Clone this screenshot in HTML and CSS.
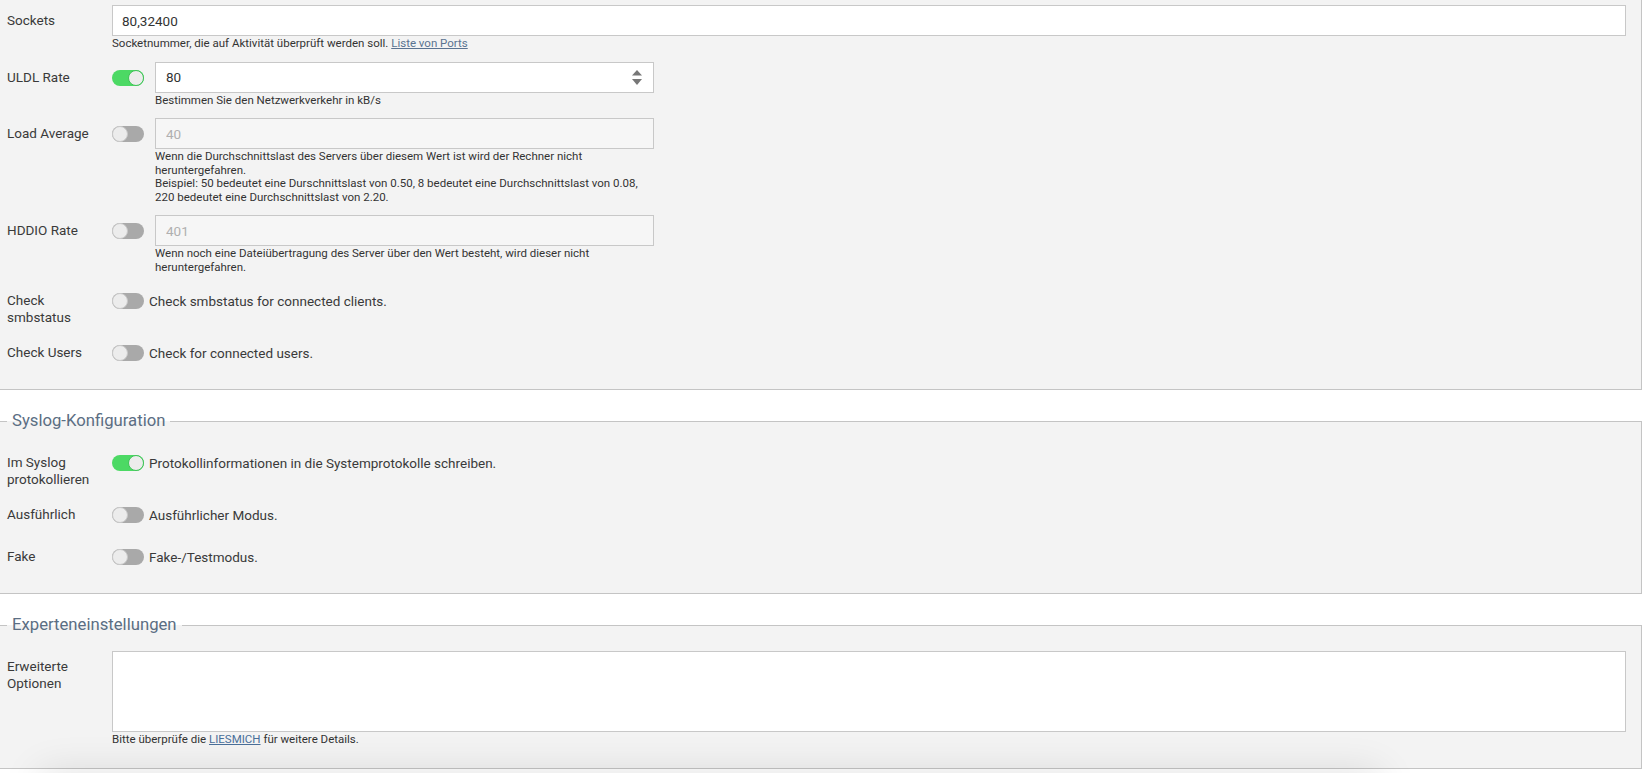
FILE: index.html
```html
<!DOCTYPE html>
<html>
<head>
    <title>Sleep Einstellungen</title>
    <link rel="stylesheet" href="styles.css">
</head>
<body>
    <div class="page">
        <fieldset class="group cut">
            <div class="row">
                <div class="label">Sockets</div>
                <div class="field">
                    <input class="text" type="text" value="80,32400">
                    <p class="help">Socketnummer, die auf Aktivität überprüft werden soll. <a href="#">Liste von Ports</a></p>
                </div>
            </div>
            <div class="row">
                <div class="label">ULDL Rate</div>
                <div class="field with-switch">
                    <span class="switch on"><span class="knob"></span></span>
                    <div class="stack">
                        <div class="number">
                            <input type="text" value="80">
                            <svg class="spin" width="10" height="15" viewBox="0 0 10 15"><polygon points="0,5.5 5,0 10,5.5"/><polygon points="0,9 10,9 5,15"/></svg>
                        </div>
                        <p class="help">Bestimmen Sie den Netzwerkverkehr in kB/s</p>
                    </div>
                </div>
            </div>
            <div class="row">
                <div class="label">Load Average</div>
                <div class="field with-switch">
                    <span class="switch"><span class="knob"></span></span>
                    <div class="stack">
                        <div class="number off">
                            <input type="text" value="40" disabled>
                        </div>
                        <p class="help">Wenn die Durchschnittslast des Servers über diesem Wert ist wird der Rechner nicht heruntergefahren.<br>Beispiel: 50 bedeutet eine Durschnittslast von 0.50, 8 bedeutet eine Durchschnittslast von 0.08, 220 bedeutet eine Durchschnittslast von 2.20.</p>
                    </div>
                </div>
            </div>
            <div class="row">
                <div class="label">HDDIO Rate</div>
                <div class="field with-switch">
                    <span class="switch"><span class="knob"></span></span>
                    <div class="stack">
                        <div class="number off">
                            <input type="text" value="401" disabled>
                        </div>
                        <p class="help">Wenn noch eine Dateiübertragung des Server über den Wert besteht, wird dieser nicht heruntergefahren.</p>
                    </div>
                </div>
            </div>
            <div class="row">
                <div class="label">Check smbstatus</div>
                <div class="field toggle-line">
                    <span class="switch"><span class="knob"></span></span>
                    <span>Check smbstatus for connected clients.</span>
                </div>
            </div>
            <div class="row">
                <div class="label">Check Users</div>
                <div class="field toggle-line">
                    <span class="switch"><span class="knob"></span></span>
                    <span>Check for connected users.</span>
                </div>
            </div>
        </fieldset>

        <fieldset class="group">
            <legend>Syslog-Konfiguration</legend>
            <div class="row">
                <div class="label">Im Syslog protokollieren</div>
                <div class="field toggle-line">
                    <span class="switch on"><span class="knob"></span></span>
                    <span>Protokollinformationen in die Systemprotokolle schreiben.</span>
                </div>
            </div>
            <div class="row">
                <div class="label">Ausführlich</div>
                <div class="field toggle-line">
                    <span class="switch"><span class="knob"></span></span>
                    <span>Ausführlicher Modus.</span>
                </div>
            </div>
            <div class="row">
                <div class="label">Fake</div>
                <div class="field toggle-line">
                    <span class="switch"><span class="knob"></span></span>
                    <span>Fake-/Testmodus.</span>
                </div>
            </div>
        </fieldset>

        <fieldset class="group">
            <legend>Experteneinstellungen</legend>
            <div class="row">
                <div class="label">Erweiterte Optionen</div>
                <div class="field">
                    <textarea class="area"></textarea>
                    <p class="help">Bitte überprüfe die <a href="#" class="readme">LIESMICH</a> für weitere Details.</p>
                </div>
            </div>
        </fieldset>
    </div>
    <div class="footer-shadow"></div>
</body>
</html>
```

FILE: styles.css
```css
body {
    margin: 0;
    background: #fff;
    color: #333;
    font-family: Roboto, "Liberation Sans", sans-serif;
    overflow: hidden;
}

.page {
    padding-right: 4px;
}

.group {
    margin: 0 0 20px;
    padding: 15px 0 10px;
    border: 1px solid #c4c4c4;
    border-left: none;
    background: #f3f3f3;
    min-width: 0;
}

.group.cut {
    border-top: none;
    padding-top: 5px;
}

.group legend {
    margin-left: 7px;
    padding: 0 5px;
    font-size: 16.7px;
    line-height: 22px;
    color: #5b6e83;
}

.row {
    display: flex;
    margin-bottom: 11px;
}

.label {
    flex-shrink: 0;
    width: 90px;
    padding: 7px 15px 0 7px;
    font-size: 13.5px;
    line-height: 17px;
    color: #3a3a3a;
}

.field {
    flex: 1;
    min-width: 0;
    padding-right: 15px;
    font-size: 13.5px;
    color: #3a3a3a;
}

.text, .area {
    display: block;
    width: 100%;
    box-sizing: border-box;
    border: 1px solid #c8c8c8;
    background: #fff;
    color: #333;
    font-family: inherit;
    font-size: 13.5px;
}

.text {
    height: 31px;
    padding: 0 9px;
}

.area {
    height: 81px;
    resize: none;
}

.help {
    margin: 1px 0 0;
    font-size: 11.5px;
    line-height: 13.5px;
    color: #333;
}

.help a {
    color: #5a7391;
}

.help a.readme {
    color: #4a6f9a;
}

.with-switch {
    display: flex;
    align-items: flex-start;
    gap: 11px;
}

.with-switch .switch {
    margin-top: 8px;
}

.stack {
    width: 499px;
}

.number {
    display: flex;
    align-items: center;
    height: 31px;
    box-sizing: border-box;
    border: 1px solid #c8c8c8;
    background: #fff;
}

.number input {
    flex: 1;
    min-width: 0;
    border: none;
    outline: none;
    background: transparent;
    padding: 0 10px;
    font-family: inherit;
    font-size: 13.5px;
    color: #333;
}

.number.off {
    background: #f6f6f6;
}

.number.off input {
    color: #b0b0b0;
}

.spin {
    margin-right: 11px;
    fill: #777;
}

.toggle-line {
    display: flex;
    align-items: center;
    gap: 5px;
    height: 31px;
}

.switch {
    display: flex;
    flex-shrink: 0;
    width: 32px;
    height: 16px;
    box-sizing: border-box;
    border-radius: 8px;
    background: #a9a9a9;
}

.switch.on {
    background: #4cd964;
    justify-content: flex-end;
}

.knob {
    width: 16px;
    height: 16px;
    box-sizing: border-box;
    border-radius: 50%;
    border: 1px solid #c9c9c9;
    background: #ececec;
}

.switch.on .knob {
    border-color: #3fc257;
}

.footer-shadow {
    position: fixed;
    left: 40px;
    bottom: -40px;
    width: 1340px;
    height: 40px;
    box-shadow: 0 0 40px rgba(0, 0, 0, 0.12);
}
```
